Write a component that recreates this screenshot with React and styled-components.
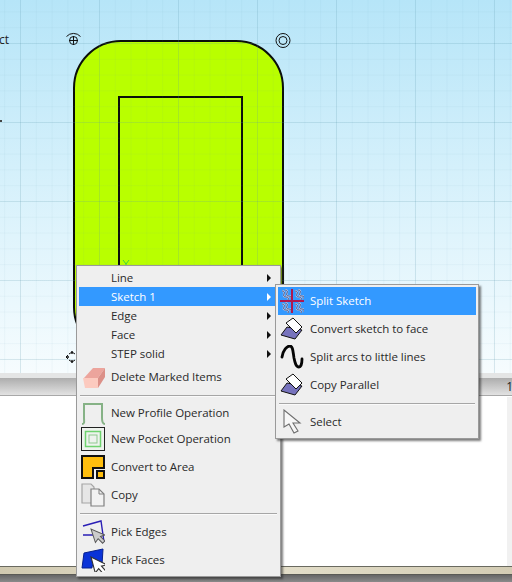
import React from "react";
import styled, { createGlobalStyle } from "styled-components";

const GlobalStyle = createGlobalStyle`
  html, body {
    margin: 0;
    padding: 0;
    background: #fff;
  }
  * {
    box-sizing: border-box;
  }
`;

function Sketch() {
  return (
    <ShapeSvg viewBox="0 0 512 373" width="512" height="373">
      <rect x="74" y="41" width="209" height="313" rx="47" fill="#b9ff00" stroke="#0a0f0a" strokeWidth="2" />
      <rect x="119" y="97" width="123" height="240" fill="none" stroke="#0a0f0a" strokeWidth="2" />
      <path d="M123 260l3 4 3-4M126 264v3" fill="none" stroke="#3fd43f" strokeWidth="1" />
      <g fill="none" stroke="#111" strokeWidth="1">
        <circle cx="73.5" cy="40.5" r="4" />
        <path d="M73.5 36v9M69 40.5h9" />
        <path d="M66.5 36.5a9.5 9.5 0 0 1 14 0" />
        <circle cx="283" cy="40.5" r="7" />
        <circle cx="283" cy="40.5" r="4" />
        <path d="M69 354l3-2 3 2M69 360l3 2 3-2M68 355l-2 2 2 2" />
        <path d="M66 357h3M72 351v3M72 360v3" strokeWidth="1.4" />
      </g>
    </ShapeSvg>
  );
}

const CursorPath = "M0 0v15l4-3 3 6 3-1.5-3-6h5z";
const WavePath = "M1 1c2 0 3 1 2 3s0 3 2 3 3 1 2 3M4 0c2 0 3 1 2 3s0 3 2 3 2 1 2 3";

const icons = {
  eraser: (
    <svg width="24" height="22" viewBox="0 0 24 22">
      <path d="M3 12L12 2h12l-7 10z" fill="#eca49c" />
      <path d="M2 12h15v10H4z" fill="#fccabf" />
      <path d="M17 12l7-10v9l-7 11z" fill="#dc9088" />
    </svg>
  ),
  profile: (
    <svg width="24" height="24" viewBox="0 0 24 24">
      <path d="M1 23c3 0 2-3 2-6V3h18v14c0 3 0 6 3 6" fill="none" stroke="#86b286" strokeWidth="2" />
    </svg>
  ),
  pocket: (
    <svg width="24" height="24" viewBox="0 0 24 24">
      <rect x=".5" y=".5" width="23" height="23" fill="#eef3ee" stroke="#222" />
      <rect x="4.5" y="4.5" width="15" height="15" fill="none" stroke="#6fd36f" strokeWidth="1.5" />
      <rect x="8" y="8" width="8" height="8" fill="none" stroke="#8fc98f" />
    </svg>
  ),
  area: (
    <svg width="24" height="24" viewBox="0 0 24 24">
      <path d="M1 1h22v12H12v10H1z" fill="#ffbe0e" stroke="#111" strokeWidth="2" />
      <rect x="16" y="16" width="7" height="7" fill="#ffbe0e" stroke="#111" strokeWidth="2" />
    </svg>
  ),
  copy: (
    <svg width="24" height="24" viewBox="0 0 24 24">
      <path d="M1 1h9l3 3v16H1z" fill="#e6e6e6" stroke="#a5a5a5" strokeWidth="1.2" />
      <path d="M10 6h8l5 5v12H10z" fill="#f2f2f2" stroke="#808080" strokeWidth="1.2" />
      <path d="M18 6v5h5" fill="none" stroke="#808080" />
    </svg>
  ),
  edges: (
    <svg width="24" height="24" viewBox="0 0 24 24">
      <path d="M2 6L20 1l3 21M2 15h10" fill="none" stroke="#2a1fb5" strokeWidth="1.4" />
      <path d={CursorPath} transform="translate(10 9) rotate(-18) scale(.95)" fill="#ccc" stroke="#555" />
    </svg>
  ),
  faces: (
    <svg width="24" height="24" viewBox="0 0 24 24">
      <path d="M3 5L22 1l-1 16-10 1v2H1z" fill="#0a33d8" stroke="#06208f" />
      <path d={CursorPath} transform="translate(10 9) rotate(-15) scale(1.1)" fill="#fff" stroke="#333" />
    </svg>
  ),
  split: (
    <svg width="24" height="24" viewBox="0 0 24 24">
      {[[1, 1], [14, 1], [1, 14], [14, 14]].map(([x, y]) => (
        <g key={`${x}-${y}`} transform={`translate(${x} ${y})`} fill="none">
          <path d={WavePath} stroke="#cfdcf5" strokeWidth="1.8" />
          <path d={WavePath} stroke="#2f3d78" strokeWidth=".9" />
        </g>
      ))}
      <path d="M12 0v24M0 12h24" stroke="#ad1850" strokeWidth="2" fill="none" />
    </svg>
  ),
  face: (
    <svg width="24" height="24" viewBox="0 0 24 24">
      <path d="M1 18L7 10l15 3-7 9z" fill="#7773bd" stroke="#111" />
      <path d="M6 6l7-5 9 9-6 6z" fill="#fff" stroke="#111" />
    </svg>
  ),
  arcs: (
    <svg width="24" height="24" viewBox="0 0 24 24">
      <path d="M2 12C3 5 7 1 10 1c3 0 3 6 4 12 1 5 2 9 5 9 2 0 3-4 3-8" fill="none" stroke="#050505" strokeWidth="2.8" strokeLinecap="round" />
    </svg>
  ),
  select: (
    <svg width="24" height="26" viewBox="0 0 24 26">
      <path d="M4 1v17l5-3 5 9 4-2-5-8h7z" fill="#f7f7f7" stroke="#6e6e6e" strokeWidth="1.1" />
    </svg>
  ),
};

const mainItems = [
  { label: "Line", arrow: true, h: 19 },
  { label: "Sketch 1", arrow: true, h: 19, active: true },
  { label: "Edge", arrow: true, h: 19 },
  { label: "Face", arrow: true, h: 19 },
  { label: "STEP solid", arrow: true, h: 19 },
  { label: "Delete Marked Items", icon: "eraser", h: 28 },
  { sep: true, h: 8 },
  { label: "New Profile Operation", icon: "profile", h: 27 },
  { label: "New Pocket Operation", icon: "pocket", h: 26 },
  { label: "Convert to Area", icon: "area", h: 29 },
  { label: "Copy", icon: "copy", h: 28 },
  { sep: true, h: 9 },
  { label: "Pick Edges", icon: "edges", h: 28 },
  { label: "Pick Faces", icon: "faces", h: 28 },
];

const subItems = [
  { label: "Split Sketch", icon: "split", h: 28, active: true },
  { label: "Convert sketch to face", icon: "face", h: 28 },
  { label: "Split arcs to little lines", icon: "arcs", h: 28 },
  { label: "Copy Parallel", icon: "face", h: 28 },
  { sep: true, h: 9 },
  { label: "Select", icon: "select", h: 28 },
];

function MenuList({ items, left, top, width }) {
  return (
    <Menu $left={left} $top={top} $width={width}>
      {items.map((item, i) =>
        item.sep ? (
          <Separator key={i} $h={item.h} />
        ) : (
          <Row key={item.label} $h={item.h} $active={item.active}>
            <IconSlot>{item.icon && icons[item.icon]}</IconSlot>
            <Label>{item.label}</Label>
            {item.arrow && <Arrow $active={item.active} />}
          </Row>
        )
      )}
    </Menu>
  );
}

export default function App() {
  return (
    <Page>
      <GlobalStyle />
      <Canvas>
        <Sketch />
        <GridOverlay />
        <EdgeText>ct</EdgeText>
        <EdgeDot />
      </Canvas>
      <Splitter />
      <TitleBar>
        <TitleMark>1</TitleMark>
      </TitleBar>
      <Panel>
        <ScrollStrip />
      </Panel>
      <SizeBar />
      <Footer />
      <MenuList items={mainItems} left={76} top={265} width={205} />
      <MenuList items={subItems} left={275} top={284} width={204} />
    </Page>
  );
}

const Page = styled.div`
  position: relative;
  width: 512px;
  height: 582px;
  display: flex;
  flex-direction: column;
  overflow: hidden;
  font-family: "Open Sans", "Liberation Sans", sans-serif;
`;

const Canvas = styled.div`
  position: relative;
  height: 373px;
  flex: none;
  background: linear-gradient(#b6e5f8 0%, #d4f0fb 45%, #f6fcfe 100%);
`;

const ShapeSvg = styled.svg`
  position: absolute;
  left: 0;
  top: 0;
`;

const GridOverlay = styled.div`
  position: absolute;
  inset: 0;
  pointer-events: none;
  background-image:
    linear-gradient(to right, rgba(90, 150, 170, 0.16) 1px, transparent 1px),
    linear-gradient(to bottom, rgba(90, 150, 170, 0.16) 1px, transparent 1px),
    linear-gradient(to right, rgba(90, 150, 170, 0.06) 1px, transparent 1px),
    linear-gradient(to bottom, rgba(90, 150, 170, 0.06) 1px, transparent 1px);
  background-size: 79px 79px, 79px 79px, 15.8px 15.8px, 15.8px 15.8px;
  background-position: 20px 43px, 20px 43px, 4.2px 11.4px, 4.2px 11.4px;
`;

const EdgeText = styled.span`
  position: absolute;
  left: -1px;
  top: 32px;
  font-size: 12px;
  line-height: 16px;
  color: #222;
`;

const EdgeDot = styled.span`
  position: absolute;
  left: 0;
  top: 120px;
  width: 2px;
  height: 2px;
  background: #444;
`;

const Splitter = styled.div`
  height: 5px;
  flex: none;
  background: #e4e5e5;
`;

const TitleBar = styled.div`
  position: relative;
  height: 18px;
  flex: none;
  background: linear-gradient(#adadad, #e2e2e2);
  border-bottom: 1px solid #a8a8a8;
`;

const TitleMark = styled.span`
  position: absolute;
  right: -1px;
  top: 1px;
  font-size: 12px;
  line-height: 16px;
  color: #222;
`;

const Panel = styled.div`
  flex: 1;
  display: flex;
  justify-content: flex-end;
  background: #fff;
  padding-top: 1px;
`;

const ScrollStrip = styled.div`
  width: 5px;
  background: #f1f1f1;
`;

const SizeBar = styled.div`
  height: 9px;
  flex: none;
  border-top: 1px solid #6a6a60;
  border-bottom: 1px solid #5a5a55;
  background: linear-gradient(to right, #d0c9b0, #e6e1cd 45%, #d3ccb4);
`;

const Footer = styled.div`
  height: 7px;
  flex: none;
  background: linear-gradient(#666, #8a8a8a);
`;

const Menu = styled.div`
  position: absolute;
  left: ${({ $left }) => $left}px;
  top: ${({ $top }) => $top}px;
  width: ${({ $width }) => $width}px;
  padding: 2px;
  background: #efefef;
  border: 1px solid #9a9a9a;
  box-shadow: 2px 2px 2px rgba(40, 40, 40, 0.6);
`;

const Row = styled.div`
  position: relative;
  display: flex;
  align-items: center;
  height: ${({ $h }) => $h}px;
  background: ${({ $active }) => ($active ? "#3399ff" : "transparent")};
  color: ${({ $active }) => ($active ? "#fff" : "#2a2a2a")};
`;

const IconSlot = styled.span`
  flex: none;
  display: flex;
  align-items: center;
  width: 32px;
  padding-left: 2px;
`;

const Label = styled.span`
  font-size: 11.5px;
  line-height: 16px;
  letter-spacing: -0.04px;
  white-space: nowrap;
`;

const Arrow = styled.i`
  position: absolute;
  right: 7px;
  top: 50%;
  margin-top: -4px;
  border-left: 4px solid ${({ $active }) => ($active ? "#fff" : "#111")};
  border-top: 4px solid transparent;
  border-bottom: 4px solid transparent;
`;

const Separator = styled.div`
  display: flex;
  align-items: center;
  height: ${({ $h }) => $h}px;
  padding: 0 1px;

  &::before {
    content: "";
    flex: 1;
    height: 1px;
    background: #a6a6a6;
    box-shadow: 0 1px 0 #fafafa;
  }
`;
